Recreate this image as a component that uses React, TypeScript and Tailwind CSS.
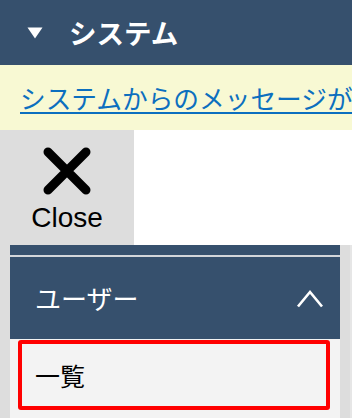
import React from 'react';

const CloseIcon: React.FC = () => (
  <svg width="48" height="48" viewBox="0 0 48 48" aria-hidden="true">
    <path d="M5 5 L43 43 M43 5 L5 43" stroke="#000" strokeWidth="9" strokeLinecap="round" />
  </svg>
);

const App: React.FC = () => {
  return (
    <div className="w-[352px] h-[418px] overflow-hidden bg-white font-['Noto_Sans_CJK_JP',sans-serif]">
      <header className="h-[65px] bg-[#36506d] flex items-center pl-[27px]">
        <svg width="16" height="12" viewBox="0 0 16 12" aria-hidden="true">
          <path d="M0.5 0.5 L15.5 0.5 L8 11.5 Z" fill="#fff" />
        </svg>
        <h1 className="ml-[26px] text-[27.5px] font-bold text-white leading-none">システム</h1>
      </header>

      <div className="h-[65px] bg-[#f8f9d3] pl-[20px] flex items-center overflow-hidden whitespace-nowrap">
        <a href="#" className="text-[25.7px] leading-none text-[#0c6fbf] underline underline-offset-[3px]">
          システムからのメッセージが
        </a>
      </div>

      <div className="flex">
        <button className="w-[134px] h-[115px] bg-[#dddddd] flex flex-col items-center pt-[17px]">
          <CloseIcon />
          <span className="mt-[9px] font-['Liberation_Sans',Arial,sans-serif] text-[28px] leading-none text-black">
            Close
          </span>
        </button>
        <div className="flex-1 bg-white" />
      </div>

      <div className="bg-[#dddddd] pl-[10px] pr-[10px] border-r-2 border-[#e6e6e6] h-[173px]">
        <div className="bg-[#36506d] h-[10px]" />
        <div className="bg-[#d3d6da] h-[2px]" />
        <div className="bg-[#36506d] h-[82px] flex items-center justify-between pl-[25px] pr-[16px]">
          <span className="text-[26px] text-white leading-none">ユーザー</span>
          <svg width="28" height="19" viewBox="0 0 28 19" aria-hidden="true">
            <path d="M2 17.5 L14 3 L26 17.5" fill="none" stroke="#fff" strokeWidth="2.6" />
          </svg>
        </div>
        <div className="bg-[#f3f3f3] pt-[1px] pl-[8px] pr-[10px] pb-[10px]">
          <div className="h-[70px] border-4 border-[#ff0000] rounded-[3px] flex items-center pl-[13px]">
            <span className="text-[25px] leading-none text-black">一覧</span>
          </div>
        </div>
      </div>
    </div>
  );
};

export default App;
